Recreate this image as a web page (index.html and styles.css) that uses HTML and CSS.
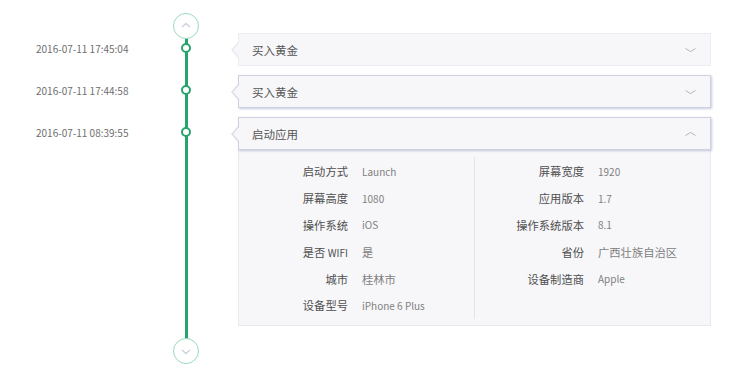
FILE: index.html
```html
<!DOCTYPE html>
<html lang="zh-CN">
<head>
    <meta charset="UTF-8">
    <meta name="viewport" content="width=device-width, initial-scale=1.0">
    <title>用户行为时间轴</title>
    <link rel="stylesheet" href="styles.css">
</head>
<body>
    <div class="timeline">
        <!-- top cap -->
        <div class="time"></div>
        <div class="axis axis-top">
            <span class="cap">
                <svg width="10" height="6" viewBox="0 0 10 6"><path d="M1 5 L5 1.5 L9 5" fill="none" stroke="#cfd1dd" stroke-width="1.6"/></svg>
            </span>
        </div>
        <div></div>

        <div class="time">2016-07-11 17:45:04</div>
        <div class="axis"><span class="dot"></span></div>
        <div class="event">
            <div class="event-head">
                <span>买入黄金</span>
                <svg width="11" height="6" viewBox="0 0 11 6"><path d="M0.5 1.5 L5.5 4.5 L10.5 1.5" fill="none" stroke="#b4b4be" stroke-width="1"/></svg>
            </div>
        </div>

        <div class="time">2016-07-11 17:44:58</div>
        <div class="axis"><span class="dot"></span></div>
        <div class="event">
            <div class="event-head active">
                <span>买入黄金</span>
                <svg width="11" height="6" viewBox="0 0 11 6"><path d="M0.5 1.5 L5.5 4.5 L10.5 1.5" fill="none" stroke="#b4b4be" stroke-width="1"/></svg>
            </div>
        </div>

        <div class="time">2016-07-11 08:39:55</div>
        <div class="axis"><span class="dot"></span></div>
        <div class="event">
            <div class="event-head active">
                <span>启动应用</span>
                <svg width="11" height="6" viewBox="0 0 11 6"><path d="M0.5 4.5 L5.5 1.5 L10.5 4.5" fill="none" stroke="#b4b4be" stroke-width="1"/></svg>
            </div>
            <div class="event-body">
                <dl class="props">
                    <dt>启动方式</dt><dd class="en">Launch</dd>
                    <dt>屏幕高度</dt><dd class="en">1080</dd>
                    <dt>操作系统</dt><dd class="en">iOS</dd>
                    <dt>是否 <span class="en">WIFI</span></dt><dd>是</dd>
                    <dt>城市</dt><dd>桂林市</dd>
                    <dt>设备型号</dt><dd class="en">iPhone 6 Plus</dd>
                </dl>
                <dl class="props">
                    <dt>屏幕宽度</dt><dd class="en">1920</dd>
                    <dt>应用版本</dt><dd class="en">1.7</dd>
                    <dt>操作系统版本</dt><dd class="en">8.1</dd>
                    <dt>省份</dt><dd>广西壮族自治区</dd>
                    <dt>设备制造商</dt><dd class="en">Apple</dd>
                </dl>
            </div>
        </div>

        <!-- bottom cap -->
        <div class="time"></div>
        <div class="axis axis-bottom">
            <span class="cap">
                <svg width="10" height="6" viewBox="0 0 10 6"><path d="M1 1 L5 4.5 L9 1" fill="none" stroke="#cfd1dd" stroke-width="1.6"/></svg>
            </span>
        </div>
        <div></div>
    </div>
</body>
</html>
```

FILE: styles.css
```css
body {
    margin: 0;
    background: #ffffff;
    font-family: "Noto Sans CJK SC", "Noto Sans", sans-serif;
    font-size: 11.3px;
    color: #555;
}
.en {
    font-size: 10px;
}
.timeline {
    display: grid;
    grid-template-columns: 166px 40px 32px 473px;
    grid-template-rows: 20px 42px 42px 210px auto;
    padding-top: 13px;
}
.timeline > .event,
.timeline > div:nth-child(3n) {
    grid-column: 4;
}
.time {
    grid-column: 1;
    padding: 8px 0 0 36px;
    line-height: 16px;
    font-size: 10px;
    color: #6e6e6e;
    white-space: nowrap;
}
.axis {
    grid-column: 2;
    display: flex;
    justify-content: center;
    align-items: flex-start;
    padding-top: 10px;
    background: linear-gradient(#27a46e, #27a46e) center / 3px 100% no-repeat;
}
.axis-top {
    padding-top: 0;
    background: none;
    position: relative;
    z-index: 1;
}
.axis-bottom {
    padding-top: 11px;
    background: linear-gradient(#27a46e, #27a46e) center top / 3px 12px no-repeat;
}
.cap {
    width: 24px;
    height: 24px;
    border: 1.5px solid #98dabd;
    border-radius: 50%;
    background: #fff;
    display: flex;
    align-items: center;
    justify-content: center;
}
.axis-top .cap svg {
    margin-top: -3px;
}
.axis-bottom .cap svg {
    margin-top: 2px;
}
.dot {
    width: 6px;
    height: 6px;
    border: 2px solid #27a46e;
    border-radius: 50%;
    background: #fff;
}
.event-head {
    position: relative;
    height: 33px;
    box-sizing: border-box;
    padding: 0 13px 0 13px;
    display: flex;
    align-items: center;
    justify-content: space-between;
    background: #f7f7fa;
    border: 1px solid #ececf2;
    font-size: 11.5px;
    color: #555;
}
.event-head svg {
    margin-right: 1px;
}
.event-head.active {
    border-color: #cdd1e2;
    box-shadow: 1px 1px 2px rgba(130, 140, 185, 0.45);
}
.event-head::before,
.event-head::after {
    content: "";
    position: absolute;
    top: 50%;
    margin-top: -8px;
    border: 8px solid transparent;
    border-left: 0;
}
.event-head::before {
    left: -8px;
    border-right: 7px solid #eaebf0;
}
.event-head::after {
    left: -6px;
    border-right: 7px solid #f7f7fa;
}
.event-head.active::before {
    border-right-color: #dcdfea;
}
.event-body {
    display: grid;
    grid-template-columns: 236px 1fr;
    height: 176px;
    box-sizing: border-box;
    padding: 7px 0 8px;
    background: #f7f7fa;
    border: 1px solid #e8e8ee;
    border-top: 0;
}
.props {
    margin: 0;
    display: grid;
    grid-template-columns: 109px 1fr;
    grid-auto-rows: 26.8px;
    column-gap: 14px;
    align-items: center;
    align-content: start;
    padding-top: 1px;
}
.props:first-child {
    border-right: 1px solid #e3e3ea;
}
.props dt {
    text-align: right;
    color: #4f4f4f;
    white-space: nowrap;
}
.props dd {
    margin: 0;
    color: #808080;
    white-space: nowrap;
}
```
